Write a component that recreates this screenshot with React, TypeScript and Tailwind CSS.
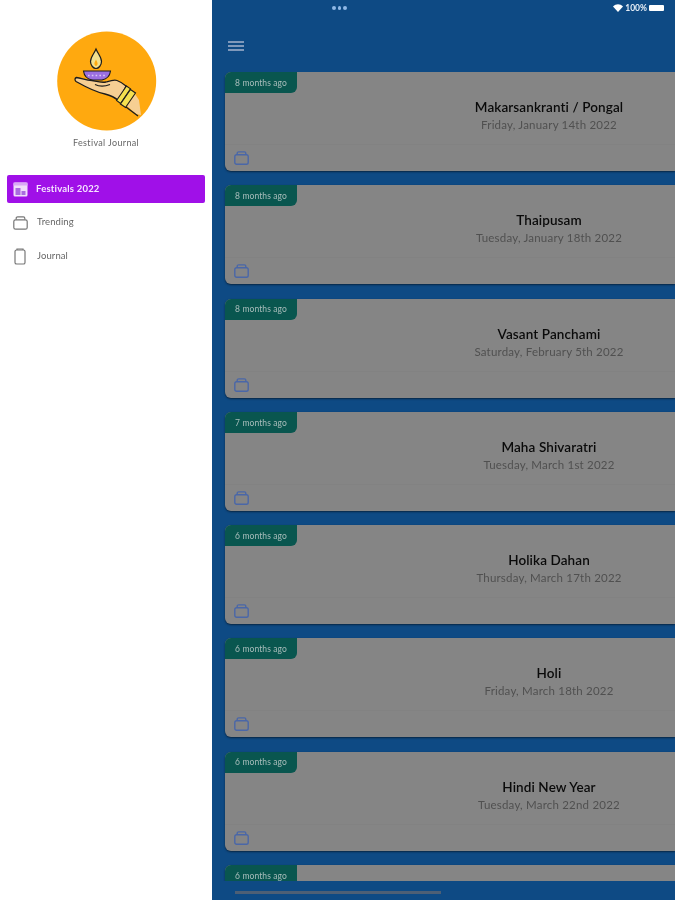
import React from 'react';

const festivals = [
  { ago: '8 months ago', title: 'Makarsankranti / Pongal', date: 'Friday, January 14th 2022' },
  { ago: '8 months ago', title: 'Thaipusam', date: 'Tuesday, January 18th 2022' },
  { ago: '8 months ago', title: 'Vasant Panchami', date: 'Saturday, February 5th 2022' },
  { ago: '7 months ago', title: 'Maha Shivaratri', date: 'Tuesday, March 1st 2022' },
  { ago: '6 months ago', title: 'Holika Dahan', date: 'Thursday, March 17th 2022' },
  { ago: '6 months ago', title: 'Holi', date: 'Friday, March 18th 2022' },
  { ago: '6 months ago', title: 'Hindi New Year', date: 'Tuesday, March 22nd 2022' },
  { ago: '6 months ago', title: '', date: '' },
];

function Logo() {
  return (
    <svg width="110" height="110" viewBox="0 0 110 110">
      <circle cx="55.7" cy="55" r="49.5" fill="#FFA90F" />
      {/* flame */}
      <path d="M45 23 C43 28 39.5 31 39.5 35.5 C39.5 39.5 42.5 42.5 45 42.5 C47.5 42.5 50.5 39.5 50.5 35.5 C50.5 31 47 28 45 23 Z" fill="#F3E08E" stroke="#1c1c1c" strokeWidth="1.2" />
      <path d="M45 33.5 C44.2 35.5 43.4 36.3 43.4 37.6 C43.4 39 44.2 40 45 40 C45.8 40 46.6 39 46.6 37.6 C46.6 36.3 45.8 35.5 45 33.5 Z" fill="#FFA90F" />
      {/* lamp */}
      <path d="M32.5 45 H59.5 C59 49 56 53 51 54 H41 C36 53 33 49 32.5 45 Z" fill="#9B6FE0" stroke="#1c1c1c" strokeWidth="1.1" />
      <path d="M37 49.5 H55" stroke="#d9c8f5" strokeWidth="1.3" strokeDasharray="1.6 2.2" />
      {/* arm */}
      <path d="M76 80 L84 68 L88 74 L90 89 L85 88 Z" fill="#F6CF93" />
      <path d="M75 81 L87 90" stroke="#1c1c1c" strokeWidth="1.3" />
      {/* hand */}
      <path d="M25.5 51.5 C30 52 35 54 41 54.5 C46 55.5 50 57 55 56 C60 54.5 63 53.5 66 54.5 C69 55.5 72 57.5 75 60 L68 75 C64 71.5 60 69.5 54 68 C44 66 33 60 25 55.5 C23.5 54 23.7 52 25.5 51.5 Z" fill="#F6CF93" stroke="#1c1c1c" strokeWidth="1.3" strokeLinejoin="round" />
      <path d="M44 58.5 C48 60.5 54 60.5 59 58.5" fill="none" stroke="#1c1c1c" strokeWidth="1.2" />
      {/* bangles */}
      <path d="M65.5 74.5 L75.5 60 L79.5 62.8 L69.5 77.5 Z" fill="#F5E04F" stroke="#1c1c1c" strokeWidth="1.1" />
      <path d="M69.5 78 L79.5 63.5 L84.5 67 L74.5 81.5 Z" fill="#F5E04F" stroke="#1c1c1c" strokeWidth="1.1" />
    </svg>
  );
}

function Wifi() {
  return (
    <svg width="10" height="8" viewBox="0 0 10 8">
      <path d="M5 8 L0 2.4 C3 -0.6 7 -0.6 10 2.4 Z" fill="#fff" />
    </svg>
  );
}

function TrayIcon({ color, strokeWidth = 1.2 }: { color: string; strokeWidth?: number }) {
  return (
    <svg width="15" height="14" viewBox="0 0 15 14" fill="none" stroke={color} strokeWidth={strokeWidth}>
      <rect x="0.8" y="3.8" width="13.4" height="9.4" rx="1.8" />
      <path d="M3.2 3.6 V2.2 C3.2 1.3 3.8 0.9 4.6 0.9 H10.4 C11.2 0.9 11.8 1.3 11.8 2.2 V3.6" />
    </svg>
  );
}

function Sidebar() {
  return (
    <aside className="w-[212px] h-full shrink-0 bg-white flex flex-col">
      <div className="flex justify-center pt-[26px]">
        <Logo />
      </div>
      <p className="mt-[1px] text-center text-[9px] leading-[12px] text-[#666] tracking-[0.35px]">Festival Journal</p>
      <nav className="mt-[26px] pl-[7px] pr-[7px] flex flex-col">
        <div className="h-[28px] rounded-[2px] bg-[#A010E8] flex items-center pl-[6px] gap-[8px]">
          <svg width="15" height="15" viewBox="0 0 15 15">
            <rect x="0.5" y="0.5" width="14" height="14" rx="1.5" fill="#F0DDFB" />
            <rect x="0.5" y="0.5" width="14" height="3" fill="#D9A8F5" />
            <rect x="2.5" y="6" width="5" height="7" fill="#A96BE0" />
            <rect x="8.5" y="9" width="4" height="4" fill="#A96BE0" />
          </svg>
          <span className="text-[9.5px] font-bold tracking-[0.2px] text-[#f6e6ff]">Festivals 2022</span>
        </div>
        <div className="mt-[5.5px] h-[28px] flex items-center pl-[6px] gap-[9px]">
          <TrayIcon color="#777" />
          <span className="text-[9.5px] tracking-[0.1px] text-[#666]">Trending</span>
        </div>
        <div className="mt-[5.5px] h-[28px] flex items-center pl-[7px] gap-[11px]">
          <svg width="12" height="17" viewBox="0 0 12 17" fill="none" stroke="#777" strokeWidth="1.2">
            <rect x="1" y="2" width="10" height="14" rx="1.6" />
            <path d="M3 2 V1 H9 V2" />
          </svg>
          <span className="text-[9.5px] tracking-[0.1px] text-[#666]">Journal</span>
        </div>
      </nav>
    </aside>
  );
}

function StatusBar() {
  return (
    <div className="h-[16px] flex items-center shrink-0">
      <div className="ml-[120px] flex gap-[2px]">
        <span className="w-[3.5px] h-[3.5px] rounded-full bg-[#8fb8e6]" />
        <span className="w-[3.5px] h-[3.5px] rounded-full bg-[#8fb8e6]" />
        <span className="w-[3.5px] h-[3.5px] rounded-full bg-[#8fb8e6]" />
      </div>
      <div className="ml-auto mr-[11px] flex items-center gap-[2px]">
        <Wifi />
        <span className="text-[8.5px] font-bold text-[#e6eef7]">100%</span>
        <span className="w-[15px] h-[6px] rounded-[1px] bg-white" />
      </div>
    </div>
  );
}

function Card({ ago, title, date }: { ago: string; title: string; date: string }) {
  return (
    <div className="relative shrink-0 h-[99px] mb-[14.3px] rounded-l-[6px] bg-[#858585] shadow-[0_1px_2px_rgba(0,0,0,0.5)] flex flex-col">
      <div className="absolute left-0 top-0 w-[72px] h-[21px] pt-[1px] rounded-tl-[6px] rounded-br-[6px] bg-[#09564F] flex items-center justify-center">
        <span className="text-[8.5px] tracking-[0.1px] text-[#a9bdbb]">{ago}</span>
      </div>
      <div className="flex-1 pl-[198px] pt-[27px] text-center">
        <p className="text-[13.5px] leading-[17px] font-semibold tracking-[0.1px] text-[#0a0a0a]">{title}</p>
        <p className="mt-[1px] text-[11.5px] leading-[16px] tracking-[0.2px] text-[#505050]">{date}</p>
      </div>
      <div className="h-[27px] border-t border-[#828282] pl-[9px] pt-[6px]">
        <TrayIcon color="#4a67a8" strokeWidth={1.4} />
      </div>
    </div>
  );
}

export default function App() {
  return (
    <div className="w-[675px] h-[900px] flex overflow-hidden blur-[0.35px] font-['Lato',sans-serif]">
      <Sidebar />
      <main className="flex-1 min-w-0 h-full bg-[#0E4A84] flex flex-col">
        <StatusBar />
        <div className="h-[56px] shrink-0 pl-[16px] pt-[25px]">
          <div className="w-[16px] flex flex-col gap-[2.5px]">
            <span className="h-[1.5px] bg-[#7f99bb]" />
            <span className="h-[1.5px] bg-[#7f99bb]" />
            <span className="h-[1.5px] bg-[#7f99bb]" />
          </div>
        </div>
        <div className="h-[809px] shrink-0 overflow-hidden pl-[13px] flex flex-col">
          {festivals.map((f, i) => (
            <Card key={i} ago={f.ago} title={f.title} date={f.date} />
          ))}
        </div>
        <div className="pl-[23px] pt-[10px]">
          <div className="w-[206px] h-[3px] bg-[#4d5f75]" />
        </div>
      </main>
    </div>
  );
}
